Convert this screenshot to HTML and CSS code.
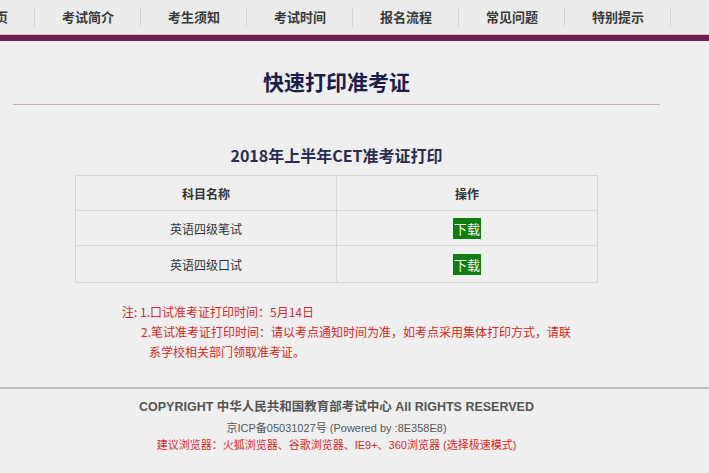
FILE: index.html
```html
<!DOCTYPE html>
<html lang="zh-CN">
<head>
<meta charset="utf-8">
<title>快速打印准考证</title>
<link rel="stylesheet" href="styles.css">
</head>
<body>
<nav class="nav">
  <ul class="nav-list">
    <li class="nav-item nav-first">首页</li>
    <li class="nav-item">考试简介</li>
    <li class="nav-item">考生须知</li>
    <li class="nav-item">考试时间</li>
    <li class="nav-item">报名流程</li>
    <li class="nav-item">常见问题</li>
    <li class="nav-item">特别提示</li>
    <li class="nav-item"></li>
  </ul>
</nav>
<div class="band"></div>

<main class="content">
  <h1 class="title">快速打印准考证</h1>
  <h2 class="subtitle">2018年上半年CET准考证打印</h2>
  <table class="exam-table">
    <thead>
      <tr><th>科目名称</th><th>操作</th></tr>
    </thead>
    <tbody>
      <tr><td>英语四级笔试</td><td><a class="btn">下载</a></td></tr>
      <tr class="last"><td>英语四级口试</td><td><a class="btn">下载</a></td></tr>
    </tbody>
  </table>
  <div class="notes">
    <div class="note-1">注: 1.口试准考证打印时间：5月14日</div>
    <div class="note-2">2.笔试准考证打印时间：请以考点通知时间为准，如考点采用集体打印方式，请联系学校相关部门领取准考证。</div>
  </div>
</main>

<footer class="footer">
  <div class="footer-inner">
    <div class="copy">COPYRIGHT 中华人民共和国教育部考试中心 All RIGHTS RESERVED</div>
    <div class="icp">京ICP备05031027号 (Powered by :8E358E8)</div>
    <div class="browsers">建议浏览器：火狐浏览器、谷歌浏览器、IE9+、360浏览器 (选择极速模式)</div>
  </div>
</footer>
</body>
</html>
```

FILE: styles.css
```css
html, body {
  margin: 0;
  padding: 0;
}
body {
  background: #efefef;
  font-family: "Noto Sans CJK SC", "Noto Sans", sans-serif;
  color: #333;
  overflow: hidden;
}

.nav {
  background: #ebebeb;
  height: 34px;
  border-bottom: 1px solid #e4b8d2;
  overflow: hidden;
}
.nav-list {
  list-style: none;
  margin: 0 0 0 -71px;
  padding: 0;
  display: flex;
}
.nav-item {
  flex: 0 0 106px;
  height: 34px;
  line-height: 34px;
  text-align: center;
  font-size: 13px;
  font-weight: bold;
  color: #3a3a3a;
  position: relative;
}
.nav-item::after {
  content: "";
  position: absolute;
  right: 0;
  top: 7px;
  height: 20px;
  width: 1px;
  background: #d4d4d4;
}
.nav-first {
  text-align: right;
  padding-right: 27px;
  box-sizing: border-box;
}
.band {
  height: 6px;
  background: #6b2150;
}

.content {
  width: 647px;
  margin-left: 13px;
}
.title {
  margin: 25px 0 0;
  padding-bottom: 8px;
  font-size: 21px;
  line-height: 30px;
  font-weight: bold;
  text-align: center;
  color: #1d1d4a;
  border-bottom: 1px solid #cfa9c0;
}
.subtitle {
  margin: 38px 0 0;
  font-size: 16px;
  line-height: 24px;
  font-weight: bold;
  text-align: center;
  color: #2b2b50;
}
.exam-table {
  width: 523px;
  margin: 8px auto 0;
  border-collapse: collapse;
  font-size: 12px;
  color: #333;
}
.exam-table th,
.exam-table td {
  width: 50%;
  border: 1px solid #d6d6d6;
  text-align: center;
  height: 34px;
  padding: 0;
}
.exam-table th {
  font-weight: bold;
}
.exam-table tr.last td {
  height: 36px;
}
.btn {
  display: inline-block;
  background: #0f7d10;
  color: #f4f4f4;
  font-size: 13px;
  line-height: 21px;
  padding: 0 1px;
  vertical-align: middle;
}

.notes {
  margin-top: 19px;
  font-size: 12px;
  line-height: 20px;
  color: #d02a2a;
}
.note-1 {
  padding-left: 109px;
}
.note-2 {
  padding-left: 136px;
  text-indent: -8px;
  width: 430px;
}

.footer {
  margin-top: 25px;
  border-top: 2px solid #bcbcbc;
}
.footer-inner {
  width: 647px;
  margin-left: 13px;
  padding-top: 8px;
  text-align: center;
  font-family: "Liberation Sans", "Noto Sans CJK SC", sans-serif;
  font-size: 11px;
  color: #555;
}
.copy {
  font-weight: bold;
  font-size: 12.5px;
  line-height: 20px;
  margin-bottom: 2px;
}
.icp {
  line-height: 18px;
}
.browsers {
  line-height: 16px;
  color: #d42b2b;
}
```
